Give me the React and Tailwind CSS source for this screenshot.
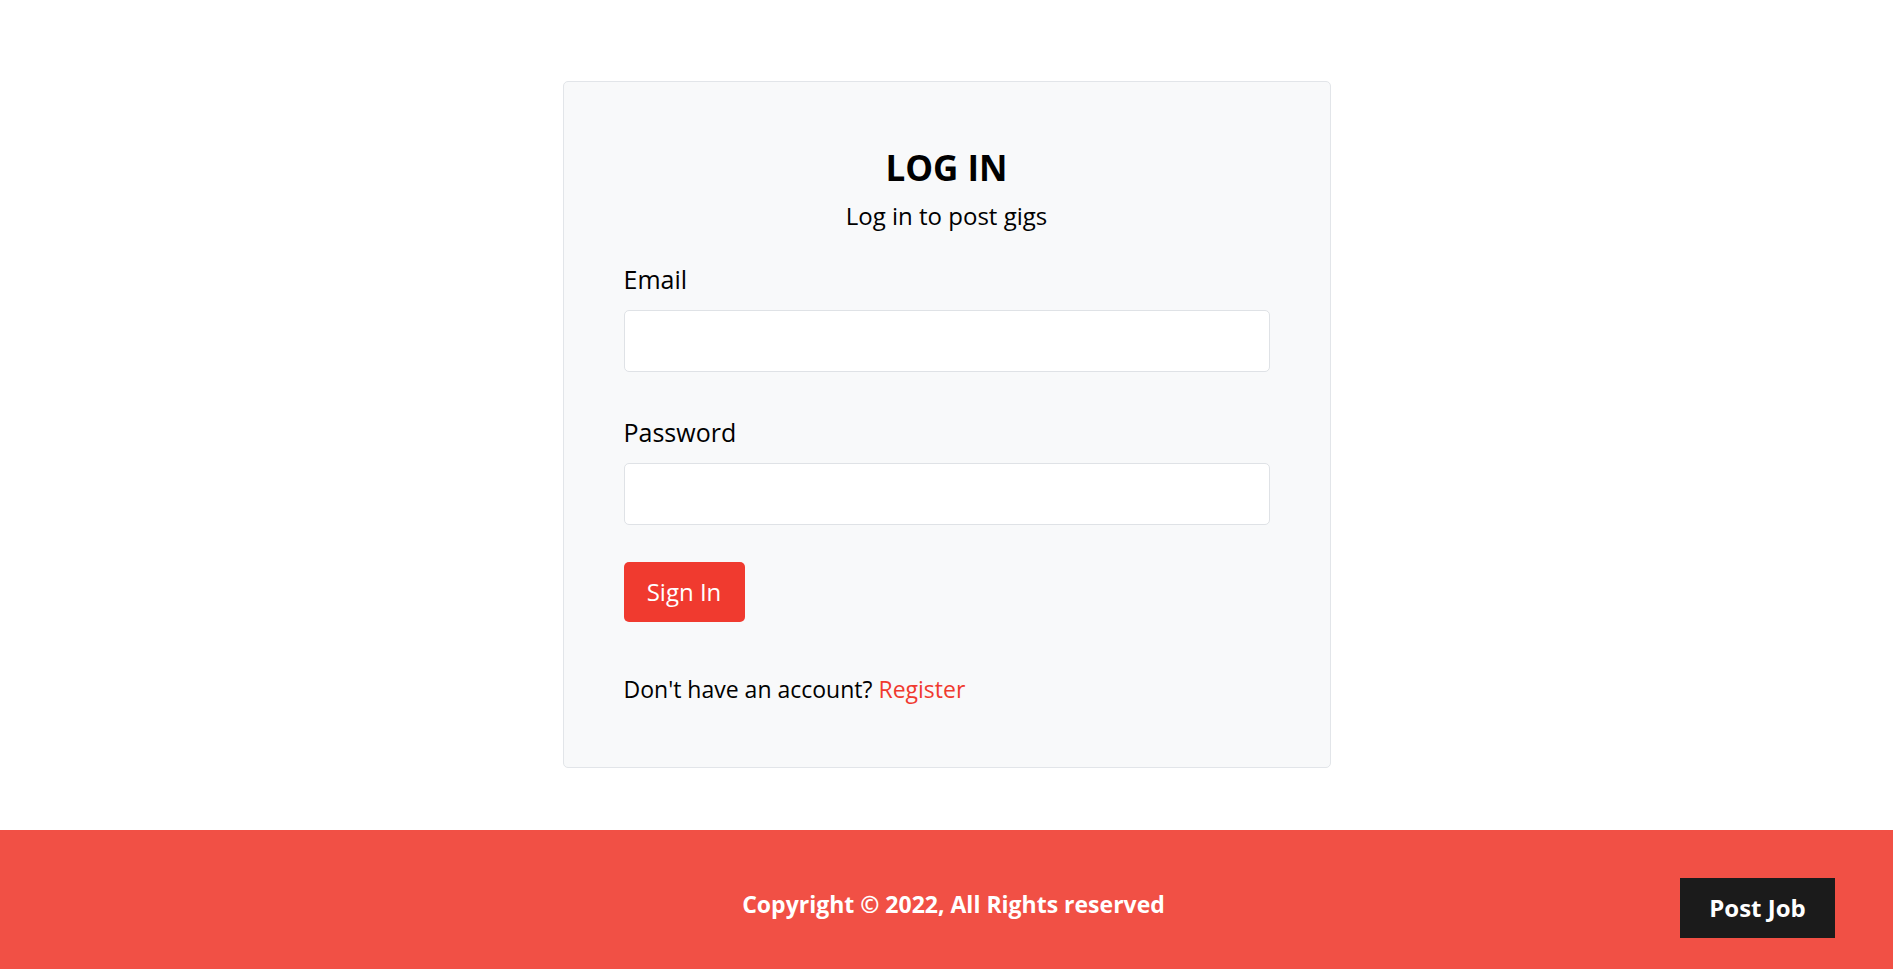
import { useState } from "react";

export default function App() {
  const [email, setEmail] = useState("");
  const [password, setPassword] = useState("");

  return (
    <div className="min-h-screen bg-white flex flex-col font-['Open_Sans',sans-serif] text-black">
      <main className="flex-1 pt-[81px] pb-[62px]">
        <div className="mx-auto w-[768px] rounded-[5px] border border-[#e2e5e9] bg-[#f8f9fa] px-[60px] pt-[64px] pb-[63px]">
          <h1 className="text-center text-[35px] font-bold leading-[44px]">LOG IN</h1>
          <p className="mt-[11px] text-center text-[24px] leading-[30px]">Log in to post gigs</p>

          <form className="mt-[31px]" onSubmit={(e) => e.preventDefault()}>
            <div>
              <label className="block text-[25px] leading-[34px]">Email</label>
              <input
                type="email"
                value={email}
                onChange={(e) => setEmail(e.target.value)}
                className="mt-[14px] block h-[62px] w-full rounded-[5px] border border-[#dfe2e6] bg-white px-4 text-[22px] outline-none"
              />
            </div>
            <div className="mt-[43px]">
              <label className="block text-[25px] leading-[34px]">Password</label>
              <input
                type="password"
                value={password}
                onChange={(e) => setPassword(e.target.value)}
                className="mt-[14px] block h-[62px] w-full rounded-[5px] border border-[#dfe2e6] bg-white px-4 text-[22px] outline-none"
              />
            </div>
            <button
              type="submit"
              className="mt-[37px] h-[60px] w-[121px] rounded-[5px] bg-[#f03a2f] text-[24px] text-white"
            >
              Sign In
            </button>
          </form>

          <p className="mt-[52px] text-[23px] leading-[30px]">
            Don't have an account? <a href="#" className="text-[#f03a2f]">Register</a>
          </p>
        </div>
      </main>

      <footer className="relative flex h-[140px] items-center justify-center bg-[#f15045] pt-[7px] pl-[14px]">
        <p className="text-[23px] font-bold leading-[30px] text-white">Copyright © 2022, All Rights reserved</p>
        <button className="absolute right-[58px] top-[48px] h-[60px] w-[155px] bg-[#1b1b1b] text-[24px] font-bold text-white">
          Post Job
        </button>
      </footer>
    </div>
  );
}
